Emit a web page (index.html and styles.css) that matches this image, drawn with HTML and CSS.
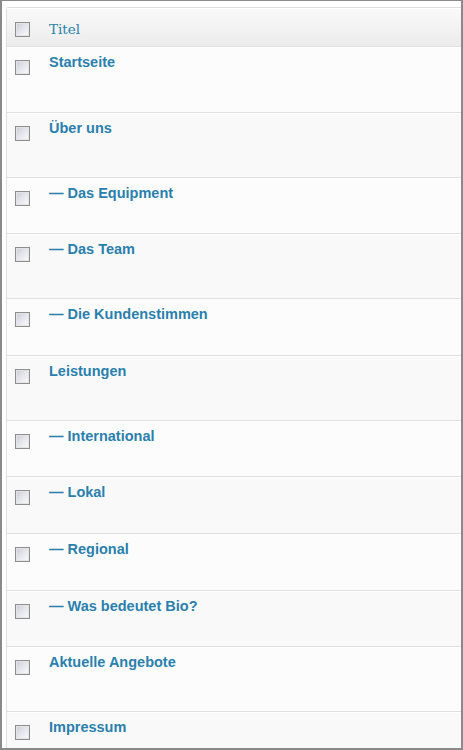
FILE: index.html
```html
<!DOCTYPE html>
<html lang="de">
<head>
<meta charset="utf-8">
<title>Seiten</title>
<link rel="stylesheet" href="styles.css">
</head>
<body>
<div class="frame">
  <div class="table">
    <div class="thead">
      <span class="cb"></span>
      <a class="col-title" href="#">Titel</a>
    </div>
    <div class="row alt h66"><span class="cb"></span><a class="title" href="#">Startseite</a></div>
    <div class="row h65"><span class="cb"></span><a class="title" href="#">Über uns</a></div>
    <div class="row alt h56"><span class="cb"></span><a class="title" href="#">— Das Equipment</a></div>
    <div class="row h65"><span class="cb"></span><a class="title" href="#">— Das Team</a></div>
    <div class="row alt h57"><span class="cb"></span><a class="title" href="#">— Die Kundenstimmen</a></div>
    <div class="row h65"><span class="cb"></span><a class="title" href="#">Leistungen</a></div>
    <div class="row alt h56"><span class="cb"></span><a class="title" href="#">— International</a></div>
    <div class="row h57"><span class="cb"></span><a class="title" href="#">— Lokal</a></div>
    <div class="row alt h57"><span class="cb"></span><a class="title" href="#">— Regional</a></div>
    <div class="row h56"><span class="cb"></span><a class="title" href="#">— Was bedeutet Bio?</a></div>
    <div class="row alt h65"><span class="cb"></span><a class="title" href="#">Aktuelle Angebote</a></div>
    <div class="row h65"><span class="cb"></span><a class="title" href="#">Impressum</a></div>
  </div>
</div>
</body>
</html>
```
FILE: styles.css
```css
html, body {
  margin: 0;
  padding: 0;
  background: #fff;
}
.frame {
  box-sizing: border-box;
  width: 463px;
  height: 750px;
  border: 2px solid #8a8a8a;
  border-top-width: 1px;
  padding: 6px 0 0 4px;
  overflow: hidden;
  background: #fff;
}
.table {
  border: 1px solid #dfdfdf;
  border-right: none;
  border-bottom: none;
  border-top-left-radius: 3px;
  background: #f9f9f9;
}
.thead {
  box-sizing: border-box;
  height: 39px;
  display: flex;
  align-items: flex-start;
  border-top: 1px solid #fff;
  border-bottom: 1px solid #dfdfdf;
  background: linear-gradient(to bottom, #f9f9f9, #ececec);
}
.thead .cb {
  margin-top: 13px;
}
.col-title {
  margin-top: 10px;
  margin-left: 19px;
  font-family: "DejaVu Serif", "Liberation Serif", serif;
  font-size: 13.5px;
  line-height: 20px;
  color: #2a80ad;
  text-decoration: none;
}
.row {
  box-sizing: border-box;
  display: flex;
  align-items: flex-start;
  border-top: 1px solid #fff;
  border-bottom: 1px solid #dfdfdf;
  background: #f9f9f9;
}
.row.alt {
  background: #fcfcfc;
}
.h65 { height: 65px; }
.h66 { height: 66px; }
.h56 { height: 56px; }
.h57 { height: 57px; }
.cb {
  box-sizing: border-box;
  flex: none;
  width: 15px;
  height: 15px;
  margin-left: 8px;
  margin-top: 12px;
  border: 1px solid #8e8e8e;
  box-shadow: inset 0 0 0 1px #e4e4e4;
  background: linear-gradient(135deg, #c9ccd6 0%, #e6e7ee 50%, #fbfbfb 100%);
}
.title {
  margin-top: 5px;
  margin-left: 19px;
  font-family: "Liberation Sans", Arial, sans-serif;
  font-weight: bold;
  font-size: 14.5px;
  line-height: 18px;
  color: #2a80ad;
  text-decoration: none;
}
```
